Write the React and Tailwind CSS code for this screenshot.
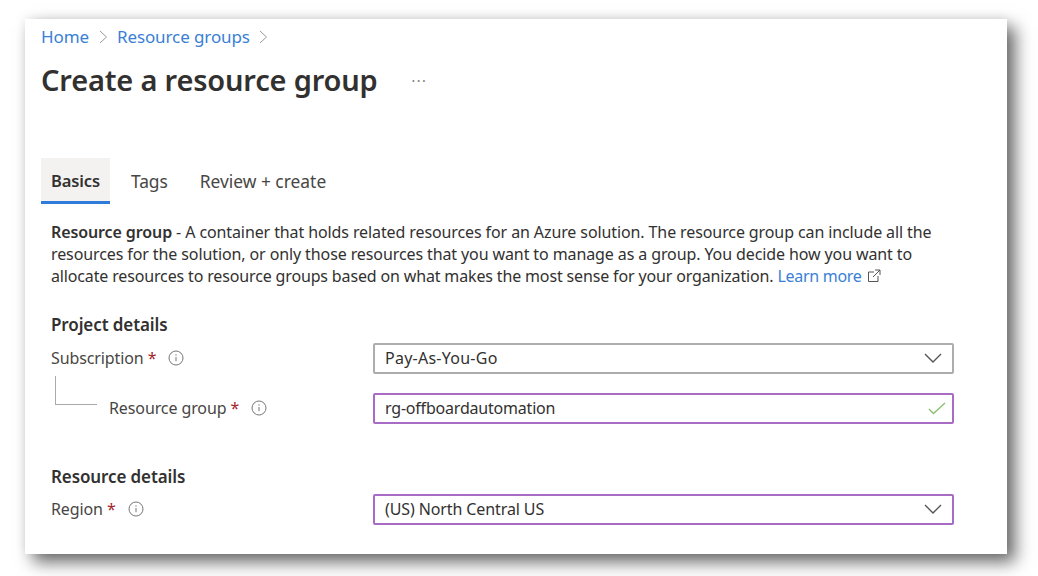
import React from "react";

const Info = () => (
  <svg width="16" height="16" viewBox="0 0 16 16" fill="none" className="shrink-0">
    <circle cx="8" cy="8" r="7" stroke="#777" strokeWidth="1" />
    <path d="M8 7v4.2" stroke="#777" strokeWidth="1" />
    <circle cx="8" cy="5" r="0.7" fill="#777" />
  </svg>
);

const Chevron = () => (
  <svg width="18" height="10" viewBox="0 0 18 10" fill="none" className="shrink-0">
    <path d="M1 1l8 8 8-8" stroke="#555" strokeWidth="1.4" />
  </svg>
);

const Crumb = () => (
  <svg width="9" height="14" viewBox="0 0 9 14" fill="none" className="shrink-0">
    <path d="M1 1l6.5 6L1 13" stroke="#999" strokeWidth="1" />
  </svg>
);

const Star = () => <span className="text-[#a4262c] ml-[4px] leading-none">*</span>;

function Row({ label, children, indent, className }) {
  return (
    <div className={"flex items-center h-[32px] " + (className || "")}>
      <div className={"flex items-center w-[322px] shrink-0 text-[#484644] " + (indent ? "pl-[58px]" : "")}>
        <span>{label}</span>
        <Star />
        <span className="ml-[12px]"><Info /></span>
      </div>
      {children}
    </div>
  );
}

function Field({ value, purple, icon, textClass, padClass }) {
  return (
    <div
      className={
        "flex items-center justify-between w-[581px] h-[31px] rounded-[2px] border-2 pl-[10px] text-[#323130] " +
        (padClass || "pr-[10px] ") + " " +
        (purple ? "border-[#a86cc4]" : "border-[#adadad]")
      }
    >
      <span className={textClass}>{value}</span>
      {icon}
    </div>
  );
}

export default function App() {
  return (
    <div className="w-[1038px] h-[576px] bg-white pt-[19px] pl-[25px] overflow-hidden font-['Noto_Sans',sans-serif] text-[16px] tracking-[-0.105px]">
      <div className="w-[982px] h-[535px] bg-white pl-[16px] pr-[16px] shadow-[8px_8px_16px_rgba(0,0,0,0.6),0_-2px_10px_rgba(0,0,0,0.06)]">
        <div className="flex items-center h-[36px] text-[#3a7fd5] text-[17px]">
          <span>Home</span>
          <span className="ml-[10px] mr-[9px]"><Crumb /></span>
          <span>Resource groups</span>
          <span className="ml-[9px]"><Crumb /></span>
        </div>
        <div className="flex items-center h-[46px] mt-[2px]">
          <h1 className="text-[29px] font-semibold text-[#323130] tracking-[-0.18px]">Create a resource group</h1>
          <span className="ml-[34px] text-[#777] text-[14px] tracking-[1.5px]">···</span>
        </div>
        <div className="flex items-stretch mt-[55px] h-[46px] text-[17.4px] text-[#484644]">
          <div className="w-[69px] bg-[#f3f2f1] border-b-[3px] border-[#2f7bd9] flex items-center justify-center font-semibold text-[#323130] text-[16.5px] pt-[4px]">
            Basics
          </div>
          <div className="ml-[21px] flex items-center pt-[1px]">Tags</div>
          <div className="ml-[32px] flex items-center pt-[1px] tracking-[0px]">Review + create</div>
        </div>
        <div className="ml-[10px] mt-[17px] text-[#323130] leading-[22px] w-[940px]">
          <p>
            <span className="font-semibold">Resource group</span> - A container that holds related resources for an Azure solution. The resource group can include all the
            <br />
            resources for the solution, or only those resources that you want to manage as a group. You decide how you want to
            <br />
            <span className="tracking-[-0.15px]">allocate resources to resource groups based on what makes the most sense for your organization.</span>{" "}
            <span className="text-[#3a7fd5] tracking-[-0.3px]">Learn more</span>
            <svg width="14" height="14" viewBox="0 0 14 14" fill="none" className="inline ml-[5px] -mt-[3px]">
              <path d="M7 3H1.5v9.5H11V7M8 1h5v5M13 1L6 8" stroke="#555" strokeWidth="1" />
            </svg>
          </p>
        </div>
        <div className="ml-[10px]">
          <h2 className="mt-[26px] h-[24px] flex items-center font-semibold text-[#323130] text-[17px]">Project details</h2>
          <Row label="Subscription" className="mt-[5px]">
            <Field value="Pay-As-You-Go" textClass="tracking-[0.25px]" icon={<Chevron />} />
          </Row>
          <div className="relative">
            <div className="absolute left-[4px] -top-[16px] w-[42px] h-[29px] border-l border-b border-[#aaa]" />
            <Row label="Resource group" indent className="mt-[18px]">
              <Field value="rg-offboardautomation" purple textClass="tracking-[-0.2px]" padClass="pr-[6px]" icon={
                <svg width="18" height="13" viewBox="0 0 18 13" fill="none" className="shrink-0">
                  <path d="M1 7l4.5 4.5L17 1" stroke="#8cc070" strokeWidth="1.4" />
                </svg>
              } />
            </Row>
          </div>
          <h2 className="mt-[41px] h-[24px] flex items-center font-semibold text-[#323130] text-[17px]">Resource details</h2>
          <Row label="Region" className="mt-[4px]">
            <Field value="(US) North Central US" purple icon={<Chevron />} />
          </Row>
        </div>
      </div>
    </div>
  );
}
